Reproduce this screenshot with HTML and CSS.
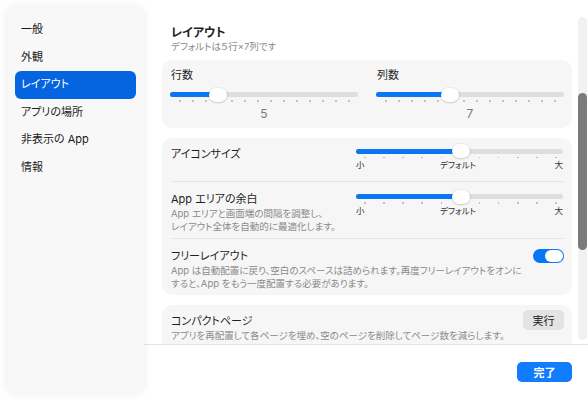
FILE: index.html
```html
<!DOCTYPE html>
<html lang="ja">
<head>
  <meta charset="UTF-8" />
  <meta name="viewport" content="width=device-width, initial-scale=1.0"/>
  <title>レイアウト</title>
  <link rel="stylesheet" href="styles.css">
</head>
<body>
  <div class="app">
    <nav class="sidebar">
      <div class="nav-item">一般</div>
      <div class="nav-item">外観</div>
      <div class="nav-item active">レイアウト</div>
      <div class="nav-item">アプリの場所</div>
      <div class="nav-item">非表示の App</div>
      <div class="nav-item">情報</div>
    </nav>

    <main class="main">
      <div class="scroll-area">
        <div class="content">
          <h2 class="section-title">レイアウト</h2>
          <p class="section-sub">デフォルトは５行×7列です</p>

          <div class="card grid-card">
            <div class="grid-col">
              <div class="label">行数</div>
              <div class="slider" style="--pos: 25.7%"><div class="fill"></div><div class="knob"></div></div>
              <div class="ticks small">
                <i></i><i></i><i></i><i></i><i></i><i></i><i></i><i></i><i></i><i></i><i></i><i></i><i></i><i></i>
              </div>
              <div class="value">5</div>
            </div>
            <div class="grid-col">
              <div class="label">列数</div>
              <div class="slider" style="--pos: 39.6%"><div class="fill"></div><div class="knob"></div></div>
              <div class="ticks small">
                <i></i><i></i><i></i><i></i><i></i><i></i><i></i><i></i><i></i><i></i><i></i><i></i><i></i><i></i>
              </div>
              <div class="value">7</div>
            </div>
          </div>

          <div class="card">
            <div class="row">
              <div class="row-text">
                <div class="label">アイコンサイズ</div>
              </div>
              <div class="control">
                <div class="slider" style="--pos: 50.5%"><div class="fill"></div><div class="knob"></div></div>
                <div class="ticks big">
                  <i></i><i></i><i></i><i></i><i></i><i></i><i></i><i></i><i></i><i></i><i></i>
                </div>
                <div class="scale"><span>小</span><span>デフォルト</span><span>大</span></div>
              </div>
            </div>
            <div class="row">
              <div class="row-text">
                <div class="label">App エリアの余白</div>
                <div class="desc">App エリアと画面端の間隔を調整し、<br>レイアウト全体を自動的に最適化します。</div>
              </div>
              <div class="control">
                <div class="slider" style="--pos: 50.5%"><div class="fill"></div><div class="knob"></div></div>
                <div class="ticks big">
                  <i></i><i></i><i></i><i></i><i></i><i></i><i></i><i></i><i></i><i></i><i></i>
                </div>
                <div class="scale"><span>小</span><span>デフォルト</span><span>大</span></div>
              </div>
            </div>
            <div class="row">
              <div class="row-text wide">
                <div class="label">フリーレイアウト</div>
                <div class="desc">App は自動配置に戻り、空白のスペースは詰められます。再度フリーレイアウトをオンにすると、App をもう一度配置する必要があります。</div>
              </div>
              <div class="toggle"><div class="toggle-knob"></div></div>
            </div>
          </div>

          <div class="card">
            <div class="row">
              <div class="row-text wide">
                <div class="label">コンパクトページ</div>
                <div class="desc">アプリを再配置して各ページを埋め、空のページを削除してページ数を減らします。</div>
              </div>
              <button class="btn-run">実行</button>
            </div>
          </div>
        </div>

        <div class="scrollbar"><div class="thumb"></div></div>
      </div>

      <footer class="footer">
        <button class="btn-done">完了</button>
      </footer>
    </main>
  </div>
</body>
</html>
```

FILE: styles.css
```css
body {
  margin: 0;
  background: #fff;
  font-family: "Inter", "Noto Sans CJK JP", sans-serif;
  font-feature-settings: "palt";
  color: #1f1f1f;
}
.app {
  display: flex;
  width: 588px;
  height: 400px;
  overflow: hidden;
}
.sidebar {
  width: 121px;
  height: 377px;
  margin: 7px 0 7px 7px;
  padding: 9px 8px 0;
  background: #f8f8f8;
  border-radius: 9px;
  box-shadow: 0 0 8px rgba(0,0,0,0.09);
  flex-shrink: 0;
}
.nav-item {
  height: 27.5px;
  line-height: 27.5px;
  padding-left: 6px;
  font-size: 11px;
  color: #1a1a1a;
  border-radius: 6px;
}
.nav-item.active {
  background: #0564e0;
  color: white;
}
.main {
  flex: 1;
  display: flex;
  flex-direction: column;
}
.scroll-area {
  height: 344px;
  display: flex;
  overflow: hidden;
}
.content {
  flex: 1;
  padding: 25px 0 0 18px;
}
.section-title {
  margin: 0;
  padding-left: 9px;
  font-size: 12px;
  line-height: 15px;
  font-weight: 700;
}
.section-sub {
  margin: 0;
  padding-left: 9px;
  font-size: 9.5px;
  line-height: 13px;
  color: #8a8a8a;
}
.card {
  background: #f6f6f6;
  border-radius: 10px;
  padding: 0 8px 0 9px;
  margin-top: 10px;
}
.grid-card {
  margin-top: 7px;
  display: flex;
  gap: 18px;
  padding: 8px 8px 7px 8px;
}
.grid-col {
  flex: 1;
}
.grid-col .label {
  padding-left: 1px;
}
.label {
  font-size: 11px;
  line-height: 15px;
}
.grid-col .slider {
  margin-top: 9px;
}
.slider {
  position: relative;
  height: 5px;
  background: #dedede;
  border-radius: 3px;
}
.fill {
  width: var(--pos);
  height: 100%;
  background: #0a76f3;
  border-radius: 3px;
}
.knob {
  position: absolute;
  top: -4.5px;
  left: calc(var(--pos) - 9px);
  width: 18px;
  height: 14px;
  border-radius: 7px;
  background: #fff;
  box-shadow: 0 0.5px 2px rgba(0,0,0,0.28);
}
.ticks {
  display: flex;
  justify-content: space-between;
  margin-top: 3px;
}
.ticks.small {
  padding: 0 8px 0 9px;
}
.ticks.big {
  padding: 0 6px 0 8px;
}
.ticks i {
  width: 1.5px;
  height: 1.5px;
  border-radius: 50%;
  background: #b5b5b5;
}
.value {
  text-align: center;
  font-size: 12px;
  line-height: 14px;
  margin-top: 5px;
  color: #7a7a7a;
}
.row {
  display: flex;
  justify-content: space-between;
  padding: 10px 0 5px;
  border-top: 1px solid #e4e4e4;
}
.row:first-child {
  border-top: none;
  padding: 9px 0 10px;
}
.row-text.wide {
  width: 352px;
}
.desc {
  font-size: 9.5px;
  line-height: 13px;
  color: #8a8a8a;
}
.control {
  width: 207px;
  margin-right: 1px;
  padding-top: 2px;
}
.scale {
  display: flex;
  justify-content: space-between;
  margin-top: 2px;
  font-size: 8.5px;
  line-height: 11px;
  color: #333;
}
.scale span:nth-child(2) {
  margin-right: 3px;
}
.toggle {
  width: 31px;
  height: 14px;
  border-radius: 7px;
  background: #0a76f3;
  display: flex;
  justify-content: flex-end;
  align-items: center;
  padding: 0 1px;
  box-sizing: border-box;
}
.toggle-knob {
  width: 18px;
  height: 12px;
  border-radius: 6px;
  background: #fff;
}
.btn-run {
  align-self: flex-start;
  margin-top: -4px;
  width: 41px;
  height: 20px;
  border: none;
  border-radius: 5px;
  background: #e3e3e3;
  font-family: inherit;
  font-size: 11px;
  color: #222;
  padding: 0;
}
.scrollbar {
  width: 9px;
  margin: 17px 2px 4px 6px;
  background: #f1f1f1;
  border-radius: 5px;
  flex-shrink: 0;
}
.thumb {
  margin-top: 76px;
  height: 157px;
  background: #7b7b7b;
  border-radius: 5px;
}
.footer {
  flex: 1;
  border-top: 1px solid #e2e2e2;
  display: flex;
  justify-content: flex-end;
  align-items: flex-start;
  padding: 17px 17px 0 0;
}
.btn-done {
  width: 55px;
  height: 20px;
  border: none;
  border-radius: 5px;
  background: #127cff;
  color: white;
  font-family: inherit;
  font-size: 11px;
  font-weight: 700;
  padding: 0;
}
```
